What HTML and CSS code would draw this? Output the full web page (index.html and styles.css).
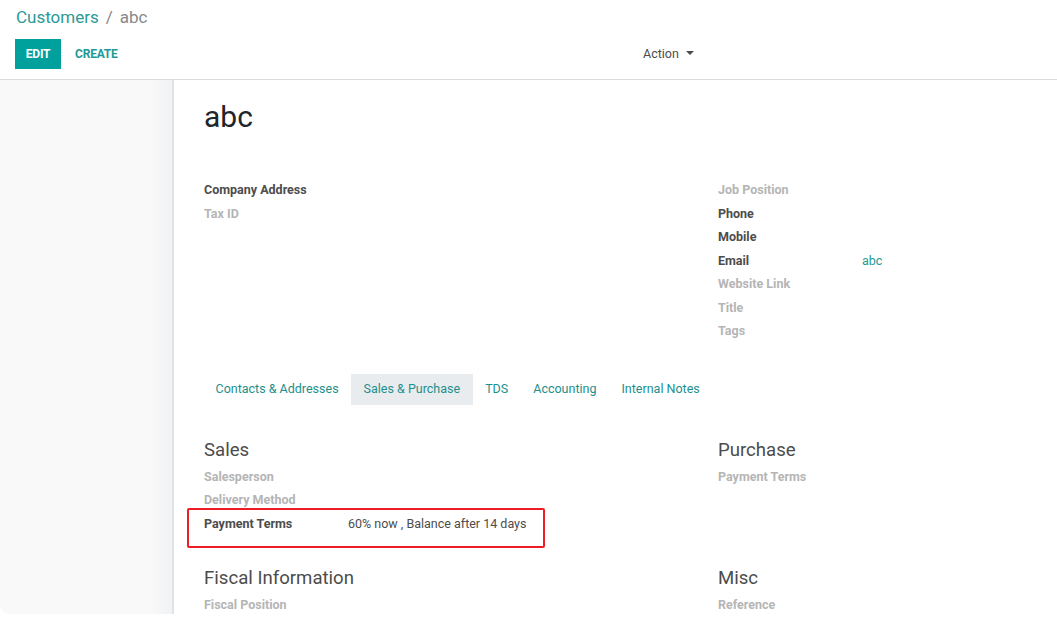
FILE: index.html
```html
<!DOCTYPE html>
<html>
<head>
<meta charset="utf-8">
<link rel="stylesheet" href="styles.css">
</head>
<body>
<div class="app">
  <div class="control-panel">
    <div class="breadcrumb"><a class="crumb-link">Customers</a><span class="crumb-sep">/</span><span class="crumb-active">abc</span></div>
    <div class="cp-row">
      <div class="cp-buttons">
        <button class="btn btn-primary">Edit</button>
        <button class="btn btn-link">Create</button>
      </div>
      <div class="cp-action">Action <span class="caret"></span></div>
    </div>
  </div>
  <div class="content">
    <div class="side"></div>
    <div class="sheet">
      <h1 class="title">abc</h1>
      <div class="groups">
        <div class="group">
          <div class="row"><span class="label strong">Company Address</span></div>
          <div class="row"><span class="label empty">Tax ID</span></div>
        </div>
        <div class="group">
          <div class="row"><span class="label empty">Job Position</span></div>
          <div class="row"><span class="label strong">Phone</span></div>
          <div class="row"><span class="label strong">Mobile</span></div>
          <div class="row"><span class="label strong">Email</span><span class="value link">abc</span></div>
          <div class="row"><span class="label empty">Website Link</span></div>
          <div class="row"><span class="label empty">Title</span></div>
          <div class="row"><span class="label empty">Tags</span></div>
        </div>
      </div>
      <div class="tabs">
        <span class="tab">Contacts &amp; Addresses</span>
        <span class="tab active">Sales &amp; Purchase</span>
        <span class="tab">TDS</span>
        <span class="tab">Accounting</span>
        <span class="tab">Internal Notes</span>
      </div>
      <div class="groups tab-groups">
        <div class="group">
          <div class="heading">Sales</div>
          <div class="row"><span class="label empty">Salesperson</span></div>
          <div class="row"><span class="label empty">Delivery Method</span></div>
          <div class="row highlighted"><span class="label strong">Payment Terms</span><span class="value">60% now , Balance after 14 days</span><span class="highlight-box"></span></div>
        </div>
        <div class="group">
          <div class="heading">Purchase</div>
          <div class="row"><span class="label empty">Payment Terms</span></div>
        </div>
        <div class="group">
          <div class="heading">Fiscal Information</div>
          <div class="row"><span class="label empty">Fiscal Position</span></div>
        </div>
        <div class="group">
          <div class="heading">Misc</div>
          <div class="row"><span class="label empty">Reference</span></div>
        </div>
      </div>
    </div>
  </div>
</div>
</body>
</html>
```

FILE: styles.css
```css
* { box-sizing: border-box; }
html, body { margin: 0; padding: 0; background: #ffffff; }
body {
  font-family: Roboto, "Noto Sans", sans-serif;
  font-size: 12.5px;
  color: #4c4c4c;
  width: 1057px;
  height: 617px;
  overflow: hidden;
}
.app {
  height: 614px;
  display: flex;
  flex-direction: column;
  border-radius: 0 0 10px 10px;
  overflow: hidden;
  background: #ffffff;
}
.control-panel {
  padding: 5px 15px 10px 15px;
  border-bottom: 1px solid #dcdcdc;
  flex: none;
}
.breadcrumb {
  font-size: 17px;
  line-height: 24px;
  height: 24px;
  padding-left: 1px;
}
.crumb-link { color: #2a9a97; }
.crumb-sep { color: #888; margin: 0 7px; }
.crumb-active { color: #888; }
.cp-row {
  margin-top: 10px;
  display: flex;
  align-items: center;
  height: 30px;
}
.cp-buttons { width: 628px; display: flex; }
.btn {
  font-family: Roboto, sans-serif;
  font-size: 12px;
  font-weight: 700;
  text-transform: uppercase;
  border: none;
  height: 30px;
  padding: 0 10px;
  cursor: pointer;
}
.btn-primary { background: #00a09d; color: #fff; width: 46px; padding: 0; letter-spacing: -0.2px; }
.btn-link { background: transparent; color: #1d9a97; margin-left: 4px; letter-spacing: -0.2px; }
.cp-action { color: #4c4c4c; font-size: 12.5px; display: flex; align-items: center; margin-top: -2px; }
.caret {
  display: inline-block;
  margin-left: 7px;
  border-left: 4px solid transparent;
  border-right: 4px solid transparent;
  border-top: 4px solid #4c4c4c;
}
.content {
  flex: 1;
  display: flex;
  min-height: 0;
}
.side {
  width: 172px;
  flex: none;
  background: linear-gradient(to right, #f9f9f9 0, #f9f9f9 150px, #f1f2f3 172px);
}
.sheet {
  flex: 1;
  background: #fff;
  border-left: 2px solid #dfe3e8;
  padding: 0 0 0 30px;
  overflow: hidden;
}
.title {
  margin: 19px 0 0 0;
  font-size: 30px;
  font-weight: 400;
  line-height: 36px;
  color: #212529;
}
.groups {
  display: grid;
  grid-template-columns: 514px 514px;
  margin-top: 43px;
}
.row {
  height: 23.5px;
  line-height: 23.5px;
  display: flex;
  position: relative;
  white-space: nowrap;
}
.label { width: 144px; flex: none; }
.label.strong { font-weight: 700; color: #4c4c4c; }
.label.empty { font-weight: 700; color: #b5b5b5; }
.value { color: #4c4c4c; }
.value.link { color: #1d9a97; }
.tabs {
  margin-top: 31px;
  display: flex;
  height: 31px;
  margin-left: -1px;
}
.tab {
  padding: 0 12.5px;
  line-height: 30px;
  color: #1d8f8c;
}
.tab.active { background: #e9ecef; }
.tab-groups { margin-top: 32px; row-gap: 30px; }
.heading {
  font-size: 18.6px;
  line-height: 26px;
  height: 28px;
  color: #4c4c4c;
}
.highlight-box {
  position: absolute;
  left: -17px;
  top: -4px;
  width: 358px;
  height: 40px;
  border: 2px solid #ee1c24;
  border-radius: 2px;
}
```
